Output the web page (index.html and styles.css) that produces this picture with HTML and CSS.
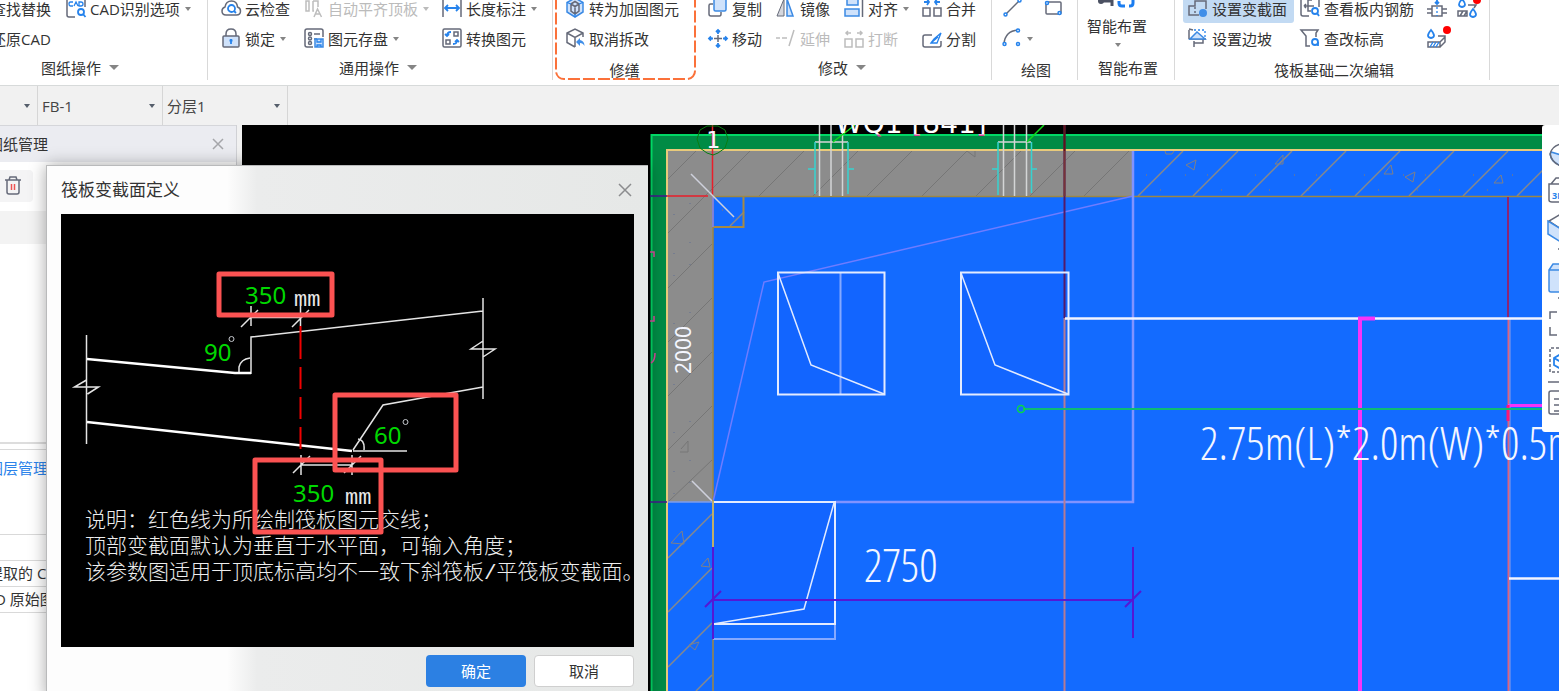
FILE: index.html
```html
<!DOCTYPE html>
<html lang="zh-CN">
<head>
<meta charset="utf-8">
<title>筏板变截面定义</title>
<link rel="stylesheet" href="styles.css">
</head>
<body>
<header class="ribbon">
  <section class="group group-sheet">
    <div class="tools">
      <button class="tool">查找替换</button>
      <button class="tool"><svg class="icon" viewBox="0 0 20 20"><path class="k" d="M1 1v15q0 2 2 2h6M19 1v7"/><path class="b" d="M7 3H4.500q-1.500 0-1.500 2t1.500 2H7M8 7l2-4 2 4M13 3v4h2q2 0 2-2t-2-2z"/><circle class="b2" cx="15" cy="13" r="3"/><path class="b2" d="M17 15l2.500 3"/></svg>CAD识别选项<i class="arrow"></i></button>
      <button class="tool">还原CAD</button>
    </div>
    <div class="caption">图纸操作<i class="arrow big"></i></div>
  </section>
  <section class="group group-common">
    <div class="tools">
      <button class="tool"><svg class="icon" viewBox="0 0 20 20"><path class="k" d="M5 16q-4 0-4-4 0-3 3-4 1-6 6.500-6t6 6q3 1 3 4 0 4-4 4z"/><circle class="b2" cx="10.500" cy="9.500" r="3.500"/><path class="b2" d="M13 12l2 2"/></svg>云检查</button>
      <button class="tool off"><svg class="icon" viewBox="0 0 20 20"><path class="g" d="M2 2h3v10H2zM9 2h5v6M9 2v10h1M10 18l3.500-8 4 8M11 15h5"/></svg>自动平齐顶板<i class="arrow"></i></button>
      <button class="tool"><svg class="icon" viewBox="0 0 20 20"><path class="k" d="M1 1v17M19 1v17"/><path class="b2" d="M3 9h14M6 6L3 9l3 3M14 6l3 3-3 3"/></svg>长度标注<i class="arrow"></i></button>
      <button class="tool"><svg class="icon" viewBox="0 0 20 20"><path class="k" d="M5 7V5q0-5 5-5t5 5v2"/><rect class="kf" x="2" y="7" width="16" height="11" rx="1"/><path class="b2" d="M10 10v5M8.500 11.500h3"/></svg>锁定<i class="arrow"></i></button>
      <button class="tool"><svg class="icon" viewBox="0 0 20 20"><path class="k" d="M9 18H3q-2 0-2-2V2q0-2 2-2h14q2 0 2 2v6M10 5h6M10 10h3"/><circle class="k" cx="6" cy="5" r="1.500"/><circle class="k" cx="6" cy="9.500" r="1.500"/><circle class="k" cx="6" cy="14" r="1.500"/><path class="bf" d="M11 10h8v8h-8z"/><path class="b" d="M13 10v3h4v-3M13 18v-2h4v2"/></svg>图元存盘<i class="arrow"></i></button>
      <button class="tool"><svg class="icon" viewBox="0 0 20 20"><rect class="k" x="1" y="0" width="18" height="18" rx="1.500"/><path class="k" d="M12 3h4v4h-4zM4 11h4v4H4z"/><path class="b2" d="M9 3q-4 0-4 4M3 5l2 2 2-2M11 15q4 0 4-4M13 13l2-2 2 2"/></svg>转换图元</button>
    </div>
    <div class="caption">通用操作<i class="arrow big"></i></div>
  </section>
  <section class="group group-repair">
    <svg class="dashes"><rect x="1" y="-12" height="91" rx="8"/></svg>
    <div class="tools">
      <button class="tool"><svg class="icon" viewBox="0 0 20 20"><path class="bf" d="M10-1l8 4.500v9.500l-8 5-8-5V3.500z"/><path class="k" d="M6 5l4-2.500L14 5v7l-4 3-4-3zM6 5l4 2.500L14 5M10 7.500V15"/><path class="b" d="M2 3.500L6 5M18 3.500L14 5M10 15v3"/></svg>转为加固图元</button>
      <button class="tool"><svg class="icon" viewBox="0 0 20 20"><path class="k" d="M18 8V4l-8-4-8 4v9.500l8 4.500M2 4l8 4.500L18 4M10 8.500V18"/><path class="bs" d="M15 9l-4 4 4 4v-3q3 0 4.500 3 0-5-4.500-6z"/></svg>取消拆改</button>
    </div>
    <div class="caption low">修缮</div>
  </section>
  <section class="group group-modify">
    <div class="tools">
      <button class="tool"><svg class="icon" viewBox="0 0 20 20"><path class="k" d="M5 5H2.500Q1 5 1 6.500V15q0 2 2 2h8.500q1.500 0 1.500-2v-2"/><rect class="bf" x="6" y="-1" width="12" height="13" rx="1.500"/></svg>复制</button>
      <button class="tool"><svg class="icon" viewBox="0 0 20 20"><path class="kf2" d="M8 0v17H1z"/><path class="bf" d="M11 0v17h6z"/></svg>镜像</button>
      <button class="tool"><svg class="icon" viewBox="0 0 20 20"><path class="bf" d="M3 0h11v6H3zM1 10h14v7H1z"/><path class="k" d="M18.500 0v18"/></svg>对齐<i class="arrow"></i></button>
      <button class="tool"><svg class="icon" viewBox="0 0 20 20"><path class="k" d="M1 9h7v8H1zM12 9h7v8h-7z"/><path class="b2" d="M2 3h5M5 0l2 3-2 3M18 3h-5M15 0l-2 3 2 3"/></svg>合并</button>
      <button class="tool"><svg class="icon" viewBox="0 0 20 20"><path class="k" d="M10 6v7M6 9.500h8"/><path class="b2" d="M10 1v4M10 14v4M1 9.500h4M15 9.500h4M8 3l2-2 2 2M8 16l2 2 2-2M3 7.500l-2 2 2 2M17 7.500l2 2-2 2"/></svg>移动</button>
      <button class="tool off"><svg class="icon" viewBox="0 0 20 20"><path class="g" d="M0 9h4M6 9h5M18 1l-5 16"/></svg>延伸</button>
      <button class="tool off"><svg class="icon" viewBox="0 0 20 20"><path class="g" d="M1 10h7v8H1zM12 10h7v8h-7zM2 4h5M4 2L2 4l2 2M18 4h-5M16 2l2 2-2 2"/></svg>打断</button>
      <button class="tool"><svg class="icon" viewBox="0 0 20 20"><path class="k" d="M10 6H3Q1 6 1 8v8q0 2 2 2h14q2 0 2-2v-4"/><path class="b" d="M9 14l3-4 7-6-4 10zM9 14l7-6"/></svg>分割</button>
    </div>
    <div class="caption">修改<i class="arrow big"></i></div>
  </section>
  <section class="group group-draw">
    <div class="tools">
      <button class="tool" aria-label="直线"><svg class="icon" viewBox="0 0 20 20"><path class="k" d="M4 15L17 2"/><circle class="bw" cx="3.500" cy="15.500" r="1.500"/><circle class="bw" cx="17.500" cy="1.500" r="1.500"/></svg></button>
      <button class="tool" aria-label="矩形"><svg class="icon" viewBox="0 0 20 20"><rect class="k" x="3" y="3" width="15" height="12" rx="1"/><circle class="bw" cx="4" cy="4" r="1.500"/><circle class="bw" cx="16.500" cy="14" r="1.500"/></svg></button>
      <button class="tool" aria-label="圆弧"><svg class="icon" viewBox="0 0 20 20"><path class="k" d="M2 15Q3 2 16 1"/><circle class="bw" cx="2.500" cy="15" r="1.500"/><circle class="bw" cx="16" cy="1.500" r="1.500"/><circle class="bw" cx="16" cy="15" r="1.500"/></svg><i class="arrow"></i></button>
    </div>
    <div class="caption low">绘图</div>
  </section>
  <section class="group group-smart">
    <button class="smart"><svg class="smart-icon" viewBox="0 0 40 24"><circle class="ks" cx="4" cy="13" r="3"/><path class="k3" d="M4 13h11M15 5v13"/><path class="b3" d="M29 5h-4q-3 0-3 3v2M22 13v2q0 3 3 3h3M32 18h1q3 0 3-3v-3M36 9q0-3-3-3"/></svg>智能布置<i class="arrow"></i></button>
    <div class="caption low">智能布置</div>
  </section>
  <section class="group group-raft">
    <div class="tools">
      <button class="tool active"><svg class="icon" viewBox="0 0 20 20"><path class="k" d="M11 16H1V7h6V2h11v8"/><path class="k" stroke-dasharray="2 2" d="M7 8v8"/><circle class="bs" cx="15" cy="14" r="4"/></svg>设置变截面</button>
      <button class="tool"><svg class="icon" viewBox="0 0 20 20"><path class="k" d="M1 0v15q0 2 2 2h6M19 0v8M4 7h10M4 7l2-2M4 7l2 2M8 1v11h3M8 1h4"/><circle class="b2" cx="15" cy="12" r="3"/><path class="b2" d="M17 14l2 3"/></svg>查看板内钢筋</button>
      <span class="pair">
        <button class="tool" aria-label="柱墩"><svg class="icon" viewBox="0 0 20 20"><path class="k" d="M5 7h10v10H5zM0 10h5M0 14h5M15 10h5M15 14h5"/><path class="b2" d="M10 0v5M8 3l2 2 2-2"/><path class="b" stroke-dasharray="2 2" d="M10 8v9"/></svg></button>
        <button class="tool" aria-label="排水沟"><svg class="icon" viewBox="0 0 20 20"><path class="b2" d="M5 0q-6 7 0 8 6-1 0-8zM16 10q-6 7 0 8 6-1 0-8z"/><path class="k" d="M1 12h9v5H1zM3 17l3-5M7 17l3-5M11 6h8l-2 3"/><circle class="dot" cx="20" cy="1" r="4"/></svg></button>
      </span>
      <button class="tool"><svg class="icon" viewBox="0 0 20 20"><path class="k" d="M1 0l4 1M1 1v9M1 10h17M6 12v6M6 14h9v-4"/><path class="bf" d="M2 10l7-7 8 7z"/><path class="b" stroke-dasharray="2 2" d="M6 1h11v8"/></svg>设置边坡</button>
      <button class="tool"><svg class="icon" viewBox="0 0 20 20"><path class="k" d="M16 8V4l2-3H1l5 6v10h4"/><circle class="b2" cx="15" cy="13" r="3"/><path class="b2" d="M18 13v4"/></svg>查改标高</button>
      <button class="tool" aria-label="集水坑"><svg class="icon" viewBox="0 0 20 20"><path class="b2" d="M4 1q-6 7 0 8 6-1 0-8z"/><path class="k" d="M1 13h12v5H1zM13 13l5-5M13 18l5-5V7h-7"/><path class="b" d="M3 18l3-5M6 18l3-5M9 18l3-5"/><circle class="dot" cx="20" cy="1" r="4"/></svg></button>
    </div>
    <div class="caption low">筏板基础二次编辑</div>
  </section>
</header>

<nav class="selectors">
  <label class="selector first"><select aria-label="构件类型"><option></option></select></label>
  <label class="selector"><select aria-label="构件"><option>FB-1</option></select></label>
  <label class="selector"><select aria-label="分层"><option>分层1</option></select></label>
</nav>

<main class="workspace">
  <aside class="sidebar">
    <div class="side-head"><span class="cut">图纸管理</span><button class="side-close" aria-label="关闭"><svg viewBox="0 0 12 12" width="12" height="12"><path d="M1 1l10 10M11 1L1 11" stroke="#a5a6aa" stroke-width="1.500"/></svg></button></div>
    <div class="side-tools"><button class="trash" aria-label="删除"><svg viewBox="0 0 20 20" width="20" height="20"><path class="k" d="M2 4h16M6 4l1-3h6l1 3M4 4v12q0 2 2 2h8q2 0 2-2V4"/><path d="M8.500 8v6M11.500 8v6" stroke="#ef5353" stroke-width="1.500"/></svg></button></div>
    <div class="side-row"></div>
    <div class="side-list"></div>
    <div class="side-layer"><a href="#" class="cut">图层管理</a></div>
    <div class="side-gap"></div>
    <div class="side-item"><span class="cut">提取的 CAD</span></div>
    <div class="side-item"><span class="cut shift">CAD 原始图层</span></div>
  </aside>

  <svg class="canvas" viewBox="242 125 1317 566" preserveAspectRatio="xMinYMin slice" fill="none">
    <defs>
      <linearGradient id="tag" gradientUnits="userSpaceOnUse" x1="0" y1="134" x2="0" y2="135"><stop offset="0" stop-color="#fff"/><stop offset="1" stop-color="#d9479b"/></linearGradient>
    </defs>
    <rect x="242" y="125" width="1317" height="566" fill="#000"/>
    <path d="M651 691V134h908v557z" fill="#008b45"/>
    <path d="M651.500 691V135H1559" stroke="#00d865" stroke-width="2"/>
    <path d="M667 150h892v541H667z" fill="#136bff"/>
    <path d="M668 151h465v45H713v306h-45z" fill="#8c8c8c"/>
    <path stroke="#767676" stroke-width="1" d="M668 179l28-28M705 196l45-45M759 196l45-45M813 196l45-45M867 196l45-45M922 196l45-45M976 196l45-45M1030 196l45-45M1084 196l45-45M668 233l44-44M668 288l44-44M668 342l44-44M668 396l44-44M668 450l44-44M668 502l44-42M681 449l7-8v11l-8 0M967 151l8 6 0-6"/>
    <path stroke="#86888c" stroke-width="1.500" d="M1138 196l45-45M1193 196l45-45M1247 196l45-45M1301 196l45-45M1355 196l45-45M1409 196l45-45M1463 196l45-45M1517 196l42-42M668 558l44-44M668 612l44-44M668 667l44-44M696 691l16-16M730 226l14-14"/>
    <path stroke="#7f8087" d="M1186 165l10-5-2 10zM1165 151l1 3h6l2-3M1275 164l8-9v9zM1384 174l7-9 2 9zM1405 177l10-5-2 10zM1494 183l7-8 2 8zM671 543l11-12 2 13zM701 566l7-8 2 9zM689 645l10-3-4 8z"/>
    <path stroke="#6f7890" stroke-width="1.500" stroke-dasharray="1 38 1 21 1 47" d="M674 214v280M690 203v280M1146 175h380M1160 190h360M722 210h15"/>
    <path d="M667 691V150H1559" stroke="#e8ca7b" stroke-width="2"/>
    <path d="M743.500 197v30H713" stroke="#a58a45" stroke-width="2"/>
    <path d="M713 691V196.500H1559" stroke="#9d8743" stroke-width="1.500"/>
    <path d="M713 227v-30" stroke="#7e80ff" stroke-width="1.500"/>
    <path d="M650 196h17M650 502h17" stroke="#46168f" stroke-width="1.500"/>
    <path d="M712.500 125v71M667 196h41" stroke="#e81e2a" stroke-width="1.500"/>
    <path d="M707 126h11l7 4 3 9-3 9-7 5-5 2-6-2-7-5-3-9 3-9z" stroke="#087d12"/>
    <text class="axis" x="706" y="148">1</text>
    <path d="M691 174l43 43M692 481l43 43" stroke="#ced1dc" stroke-width="1.500"/>
    <g stroke="#d4d5d6" stroke-width="1.500">
      <path d="M819.500 125v71M831 125v71M842.500 125v71M1003.500 125v71M1014.500 125v71M1026.500 125v71M815 142h33M998 142h33"/>
      <path stroke="#37d2d0" d="M815 194v-52M848 194v-52M808 169h7M848 169h6M998 195v-53M1031.500 193v-51M992 169h6M1031 169h6"/>
      <path stroke="#11d81c" d="M833 142l22-17M1027 142l17-17"/>
    </g>
    <text class="tag" x="835" y="133">WQ1 [841]</text>
    <g fill="#1265ff">
      <path d="M778 272h106v122H778zM961 272h107v122H961zM713 502h122v122H713z"/>
    </g>
    <path d="M1133 196L764 282 713 502" stroke="#6f7cff" stroke-width="1.500"/>
    <path d="M1133 151v351H835" stroke="#8193ff" stroke-width="2.500"/>
    <path d="M668 502h45" stroke="#7e9dec" stroke-width="1.500"/>
    <path d="M1064.500 125v193" stroke="#531a68" stroke-width="2"/>
    <path d="M1064.500 125v26" stroke="#5e1518" stroke-width="2"/>
    <path d="M1064.500 151v45" stroke="#763437" stroke-width="2"/>
    <path d="M1064.500 318v373" stroke="#b57b93" stroke-width="2"/>
    <path d="M1508 197v121" stroke="#8b2574" stroke-width="2"/>
    <path d="M1508.500 318v373" stroke="#dc637e" stroke-width="2"/>
    <path d="M1510 318v373" stroke="#8e9ee8"/>
    <g stroke="#e3ebff" stroke-width="2">
      <path stroke="#85a9ff" d="M840.500 273v121M835 624v15H713"/>
      <path d="M778 272.500h106.500v122H778zM961 272.500h107.500v122H961zM713 502h122v122H713z"/>
      <path stroke-width="1.500" d="M778 273l33 92 73 29M961 273l34 92 73 29M834 503l-30 106-91 15"/>
      <path stroke="#f2f4ff" stroke-width="2.500" d="M1065 318.500h494M1509 578.500h50"/>
    </g>
    <path d="M713 500v47" stroke="#b29b38" stroke-width="1.500"/>
    <path d="M1360 691V318.500h15" stroke="#f733f8" stroke-width="4"/>
    <path d="M1508 405.500h51" stroke="#f733f8" stroke-width="3"/>
    <path d="M1508 405v16" stroke="#ff1674" stroke-width="3"/>
    <path d="M1023 409h519" stroke="#0dbc75" stroke-width="2"/>
    <circle cx="1021" cy="409" r="3.500" stroke="#08d946" stroke-width="1.500"/>
    <path d="M713 600h420M1133 547v91M713 547v92M705 607l16-16M1125 607l16-16" stroke="#5418d5" stroke-width="2"/>
    <text class="wall" transform="translate(691 374) rotate(-90)">2000</text>
    <text class="cad" x="864" y="582">2750</text>
    <text class="cad" x="1200" y="460">2.75m(L)*2.0m(W)*0.5m(H)</text>
    <path d="M650 252h4v5M650 321h4v-5M651 363q4-2 4-10" stroke="#d9479b" stroke-width="1.500"/>
  </svg>

  <div class="view-tools">
    <svg viewBox="0 0 17 307" width="17" height="307">
      <path class="bf" d="M9 27q-3 8 10 14V30z"/>
      <path class="k" fill="#fff" d="M19 19q-9 2-11 10 2 9 11 12M19 53h-5l-5 6H7v16q0 2 3 2h9M9 59h10M19 89L7 96l12 8"/>
      <text class="three" x="10" y="74">3D</text>
      <path class="bf" d="M6 96v13l13 8v-13z"/>
      <path class="k" d="M16 124h3M16 173h3"/>
      <path class="bf" d="M7 145l4-6h8v28H9q-2 0-2-2zM7 145h12"/>
      <path class="k" d="M15 187H8v7M8 202v8h7M6 257h13M19 266H9q-2 0-2 2v19q0 2 2 2h10M12 274h6M12 280h6M12 286h6"/>
      <path class="k" stroke-dasharray="3 2" d="M17 223H8v24h9"/>
      <path class="b2" d="M19 229l-7 4v7l7 4M12 233l7 4"/>
    </svg>
  </div>

  <section class="dialog" role="dialog" aria-labelledby="dialog-title">
    <div class="dialog-head"><h1 id="dialog-title">筏板变截面定义</h1><button class="dialog-close" aria-label="关闭"><svg viewBox="0 0 14 14" width="14" height="14"><path d="M1 1l12 12M13 1L1 13" stroke="#8b8c8e" stroke-width="1.500"/></svg></button></div>
    <svg class="diagram" viewBox="61 214 573 433" fill="none">
      <g stroke="#e4e4e4" stroke-width="1.500">
        <path d="M86.500 335v109M86.500 380l-12 7h24l-11 7M483 298v101M483 341l-12 8h24l-12 8M251 306v20M300.500 306v20M251 317.500h49M241 327l17-17M292 327l17-17M239 373v-6q2-8 11-9M251 374v-37l232-26M353 450l30-45 100-18M353 451h54M358 439q7 1 6 11M301 455v20M352 455v20M301 465h51M293 473l17-17M344 473l17-17"/>
        <path stroke="#fff" stroke-width="2.500" d="M87 359l148 14h16M87 422l265 29"/>
      </g>
      <path d="M300.500 326v33M300.500 367v22M300.500 397v22M300.500 427v22" stroke="#f00000" stroke-width="2"/>
      <g class="value"><text x="245" y="304">350</text><text x="204" y="361">90</text><text x="374" y="444">60</text><text x="293" y="502">350</text></g>
      <g class="unit"><text x="294" y="306">mm</text><text x="345" y="504">mm</text></g>
      <circle cx="231.500" cy="339" r="2.500" stroke="#c5c8ce"/><circle cx="405.500" cy="422" r="2.500" stroke="#c5c8ce"/>
      <g class="note"><text x="85" y="527">说明：红色线为所绘制筏板图元交线；</text><text x="85" y="553">顶部变截面默认为垂直于水平面，可输入角度；</text><text x="85" y="579">该参数图适用于顶底标高均不一致下斜筏板/平筏板变截面。</text></g>
      <g stroke="#fb5252" stroke-width="5" stroke-linejoin="round"><path d="M219 274h113v41H219zM335 395h121v75H335zM255 460h126v72H255z"/></g>
    </svg>
    <div class="dialog-foot"><button class="ok">确定</button><button class="cancel">取消</button></div>
  </section>
</main>
</body>
</html>
```
FILE: styles.css
```css
* { box-sizing: border-box; }
body {
  margin: 0;
  height: 100vh;
  overflow: hidden;
  display: flex;
  flex-direction: column;
  background: #fff;
  color: #333;
  font: 15px/20px "Open Sans", "Noto Sans CJK SC", sans-serif;
}
button { border: 0; padding: 0; background: none; color: inherit; font: inherit; white-space: nowrap; }
a { color: #2b83ea; text-decoration: none; }

/* icon strokes */
.k, .b, .b2, .g, .k3, .b3 { fill: none; stroke: #656a79; stroke-width: 1.5; }
.b, .b2 { stroke: #2683ec; }
.b { stroke-width: 1.3; }
.b2 { stroke-width: 1.8; }
.g { stroke: #bdbdbd; }
.k3 { stroke: #4b5162; stroke-width: 3; }
.b3 { stroke: #1b7df0; stroke-width: 3; }
.kf { fill: #cfe2fb; stroke: #656a79; stroke-width: 1.5; }
.kf2 { fill: #d5d7dd; stroke: #656a79; }
.bf { fill: #cfe2fb; stroke: #3c8ae4; stroke-width: 1.5; }
.bs { fill: #408ee8; }
.bw { fill: #fff; stroke: #2683ec; stroke-width: 1.5; }
.ks { fill: #4b5162; }
.dot { fill: #f00; }

.ribbon { display: flex; flex: none; height: 85px; overflow: hidden; background: #fff; }
.group { flex: none; height: 80px; border-right: 1px solid #d9d9d9; display: flex; flex-direction: column; }
.tools { display: grid; grid-auto-rows: 30px; align-items: center; margin-top: -6px; }
.tool { display: flex; align-items: center; justify-self: start; gap: 4px; height: 28px; }
.tool.off { color: #bbb; }
.icon { width: 20px; height: 20px; overflow: visible; }
.arrow { width: 0; height: 0; margin-left: 1px; border: 3px solid transparent; border-top: 4px solid #858585; border-bottom: 0; }
.off .arrow { border-top-color: #bbb; }
.arrow.big { margin-left: 8px; border-width: 5px 5px 0; }
.caption { display: flex; align-items: center; justify-content: center; height: 28px; margin-top: 1px; }
.caption.low { padding-top: 4px; }

.group-sheet { width: 217px; margin-left: -9px; }
.group-sheet .tools { grid-template-columns: 75px auto; }
.group-sheet .caption { justify-content: flex-end; padding-right: 88px; }
.group-common { width: 345px; }
.group-common .tools { grid-template-columns: 83px 138px auto; padding-left: 13px; }
.group-common .caption { padding-right: 4px; }
.group-repair { position: relative; width: 143px; border-right: 0; }
.group-repair .tools { padding-left: 12px; }
.dashes { position: absolute; top: 0; left: 2px; width: 141px; height: 80px; overflow: hidden; pointer-events: none; }
.dashes rect { width: calc(100% - 2px); fill: none; stroke: #fb713a; stroke-width: 2; stroke-dasharray: 12 3; }
.group-modify { width: 296px; }
.group-modify .tools { grid-template-columns: 68px 68px 78px auto; padding-left: 12px; }
.group-modify .caption { padding-right: 3px; }
.group-draw { width: 86px; }
.group-draw .tools { grid-template-columns: 41px auto; padding-left: 10px; }
.group-draw .caption { padding-left: 3px; }
.group-smart { width: 97px; }
.smart { display: flex; flex-direction: column; align-items: center; align-self: flex-start; height: 54px; margin-left: 9px; line-height: 28px; }
.smart-icon { width: 40px; height: 24px; margin-top: -12px; flex: none; }
.smart .arrow { margin-top: 3px; }
.group-smart .caption { padding-left: 4px; }
.group-raft { width: 315px; }
.group-raft .tools { grid-template-columns: 112px 127px auto; padding-left: 13px; }
.group-raft .caption { padding-left: 4px; }
.tool.active { margin-left: -5px; padding: 0 7px 0 5px; border-radius: 3px; background: #c2daf3; }
.pair { display: flex; gap: 10px; }

.selectors { display: flex; flex: none; height: 40px; border-top: 1px solid #d7dada; background: #f1f1f1; }
.selector { position: relative; width: 125px; border-right: 1px solid #d6d6d6; }
.selector.first { width: 38px; }
.selector select { width: 100%; height: 100%; padding: 0 4px; border: 0; appearance: none; background: none; color: #444; font: inherit; }
.selector::after { content: ""; position: absolute; right: 7px; top: 18px; border: 3px solid transparent; border-top: 4px solid #555e6b; border-bottom: 0; pointer-events: none; }

.workspace { position: relative; display: flex; flex: 1; min-height: 0; gap: 5px; background: #f1f1f1; }
.sidebar { flex: none; width: 237px; overflow: hidden; border-right: 1px solid #d0d1d5; background: #fff; }
.cut { display: block; margin-left: -12px; white-space: nowrap; }
.cut.shift { margin-left: -24px; }
.side-head { display: flex; align-items: center; justify-content: space-between; height: 37px; padding-right: 12px; background: #ebecf1; border-top: 1px solid #d5d6da; }
.side-close { display: flex; }
.side-tools { height: 49px; padding-top: 8px; }
.trash { display: flex; align-items: center; padding-left: 3px; width: 33px; height: 32px; border-radius: 0 4px 4px 0; background: #f4f4f5; }
.side-row { height: 33px; background: #f3f3f3; }
.side-list { height: 200px; border-bottom: 2px solid #ddd; }
.side-layer { height: 86px; margin-top: 5px; padding-top: 8px; border-top: 1px solid #d9d9d9; border-bottom: 1px solid #d9d9d9; }
.side-gap { height: 26px; border-bottom: 1px solid #d9d9d9; }
.side-item { height: 26px; padding-top: 2px; border-bottom: 1px solid #d9d9d9; }

.canvas { flex: 1; min-width: 0; height: 100%; }
.canvas text { fill: #f4f6ff; }
.canvas .axis { font: 23px "DejaVu Sans Mono", monospace; }
.canvas .tag { font: 28px "DejaVu Sans", sans-serif; fill: url(#tag); }
.canvas .wall { font: 21px "Noto Sans", sans-serif; }
.canvas .cad { font: 300 46px "Open Sans Condensed Light", "Roboto Condensed Light", "Roboto Condensed", "Liberation Sans Narrow", "Open Sans", sans-serif; }

.view-tools { position: absolute; top: 0; right: 0; width: 17px; overflow: hidden; background: #fff; line-height: 0; border-radius: 3px 0 0 3px; }
.three { font: bold 9px "Open Sans", sans-serif; fill: #2683ec; }

.dialog {
  position: absolute;
  left: 46px;
  top: 40px;
  padding: 0 14px 12px;
  border: 1px solid #b9babb;
  border-width: 1px 0 0 1px;
  background: linear-gradient(90deg, #fdfdfd 180px, #ebecec 210px, #e6e8e7);
  box-shadow: 0 0 16px rgba(0, 0, 0, .35);
}
.dialog-head { display: flex; align-items: center; justify-content: space-between; height: 48px; }
.dialog-head h1 { margin: 0; font-size: 17px; line-height: 24px; font-weight: 400; }
.dialog-close { display: flex; padding-right: 2px; }
.diagram { display: block; width: 573px; height: 433px; background: #000; }
.value { fill: #00d800; font: 24px "Noto Sans", sans-serif; }
.unit { fill: #e8e8e8; font: 22px "Liberation Mono", monospace; }
.note { fill: #eee; font: 300 21px "Liberation Mono", "Noto Sans CJK SC", monospace; }
.dialog-foot { display: flex; justify-content: flex-end; gap: 8px; padding-top: 8px; }
.dialog-foot button { width: 100px; height: 32px; border-radius: 4px; }
.ok { background: #2c80e3; color: #fff; }
.cancel { background: #fff; border: 1px solid #cfcfcf; }
```
